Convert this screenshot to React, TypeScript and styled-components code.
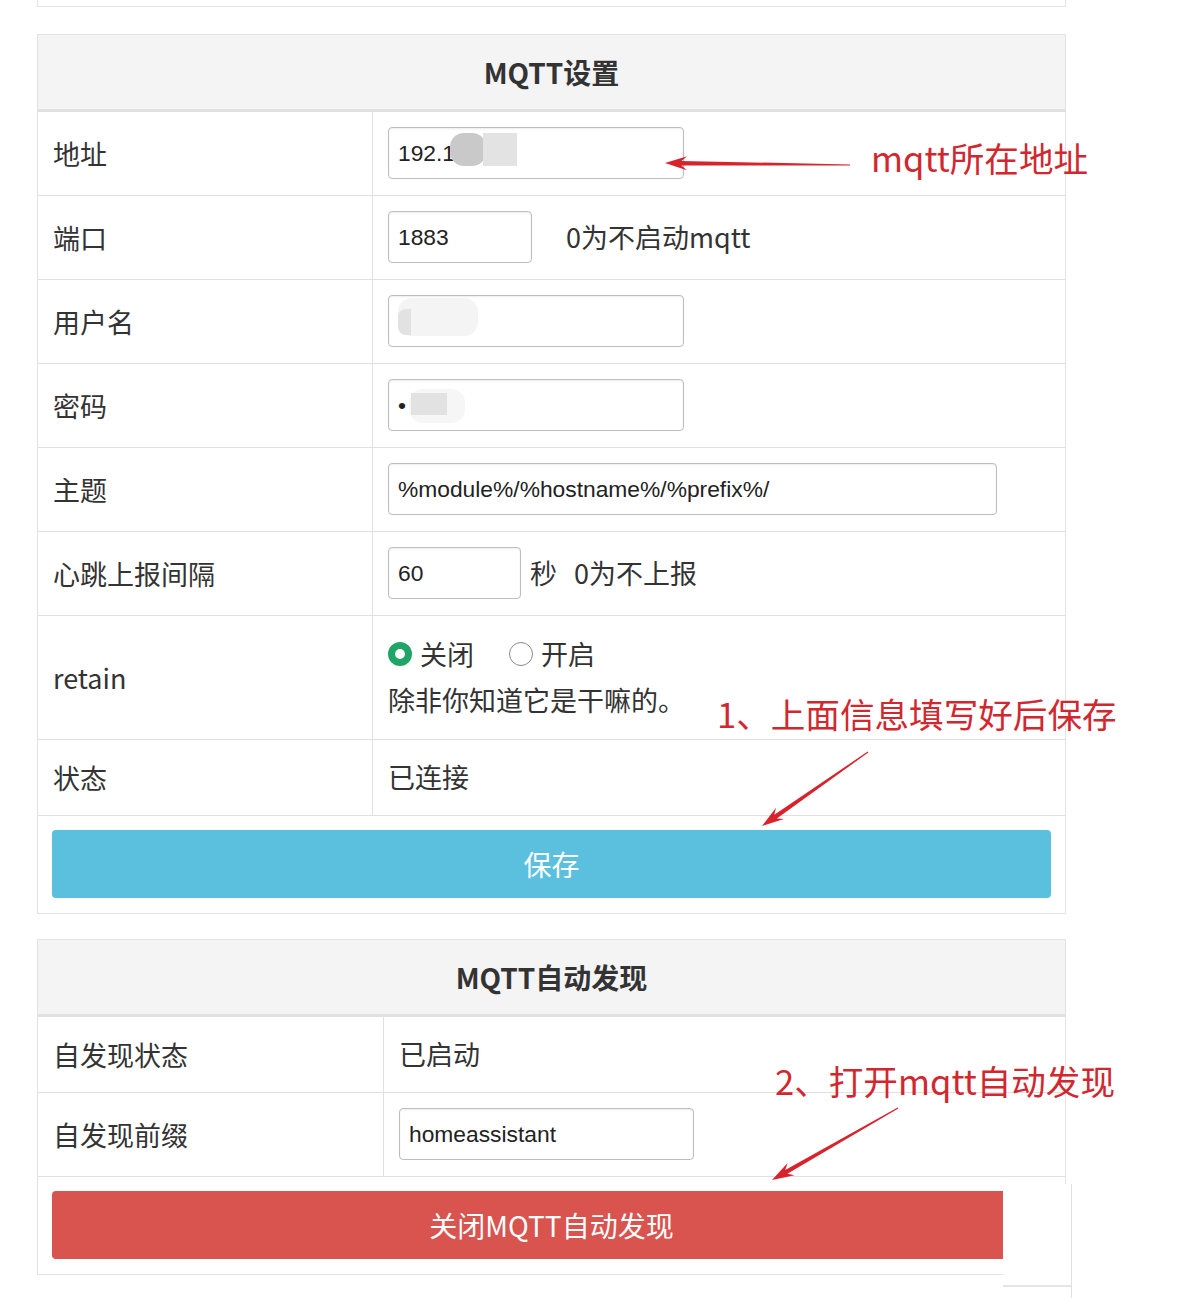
import React from "react";
import styled, { createGlobalStyle, css } from "styled-components";

const GlobalStyle = createGlobalStyle`
	html, body {
		margin: 0;
		padding: 0;
		background: #fff;
	}
	body {
		font-family: "Noto Sans CJK SC", "Noto Sans", sans-serif;
		color: #333;
	}
`;

const Page = styled.div`
	position: relative;
	width: 1200px;
	height: 1298px;
	overflow: hidden;
`;

const Column = styled.div`
	display: flex;
	flex-direction: column;
	width: 1029px;
	margin-left: 37px;
`;

const PrevPanelTail = styled.div`
	height: 6px;
	border: 1px solid #e3e3e3;
	border-top: none;
`;

const Panel = styled.section<{ $gap: number }>`
	margin-top: ${(p) => p.$gap}px;
	border: 1px solid #e3e3e3;
	background: #fff;
`;

const PanelHeader = styled.h2`
	margin: 0;
	height: 74px;
	display: flex;
	align-items: center;
	justify-content: center;
	background: #f4f4f4;
	border-bottom: 2px solid #e2e2e2;
	font-size: 28px;
	font-weight: 700;
	color: #333;
`;

const Grid = styled.div<{ $label: number }>`
	display: grid;
	grid-template-columns: ${(p) => p.$label}px 1fr;
`;

const LabelCell = styled.div`
	display: flex;
	align-items: center;
	padding: 0 15px;
	border-top: 1px solid #e0e0e0;
	border-right: 1px solid #e0e0e0;
	font-size: 27px;
	color: #333;
`;

const ValueCell = styled.div<{ $stack?: boolean }>`
	display: flex;
	flex-direction: ${(p) => (p.$stack ? "column" : "row")};
	align-items: ${(p) => (p.$stack ? "flex-start" : "center")};
	padding: 15px 15px 16px;
	min-height: 44px;
	border-top: 1px solid #e0e0e0;
	font-size: 27px;
	line-height: 44px;
	color: #333;
`;

const Line = styled.div`
	display: flex;
	align-items: center;
	height: 46px;
`;

const InputBox = styled.div<{ $w: number }>`
	position: relative;
	box-sizing: border-box;
	width: ${(p) => p.$w}px;
	height: 52px;
	display: flex;
	align-items: center;
	padding: 0 9px;
	border: 1px solid #bdbdbd;
	border-radius: 4px;
	box-shadow: inset 0 1px 2px rgba(0, 0, 0, 0.08);
	background: #fff;
	font-family: "Liberation Sans", Arial, sans-serif;
	font-size: 22.8px;
	color: #222;
`;

const Hint = styled.span<{ $gap: number }>`
	margin-left: ${(p) => p.$gap}px;
	white-space: nowrap;
`;

const Blur = styled.span<{ $x: number; $y: number; $w: number; $h: number; $bg: string; $r?: string }>`
	position: absolute;
	left: ${(p) => p.$x}px;
	top: ${(p) => p.$y}px;
	width: ${(p) => p.$w}px;
	height: ${(p) => p.$h}px;
	background: ${(p) => p.$bg};
	border-radius: ${(p) => p.$r || "14px"};
`;

const Radio = styled.span<{ $on?: boolean }>`
	box-sizing: border-box;
	width: 24px;
	height: 24px;
	border-radius: 50%;
	margin-right: 8px;
	background: #fff;
	${(p) =>
		p.$on
			? css`
					border: 7px solid #1fa667;
			  `
			: css`
					border: 1.5px solid #8a8a8a;
			  `}
`;

const RadioText = styled.span<{ $gap?: number }>`
	margin-right: ${(p) => p.$gap || 0}px;
`;

const ButtonRow = styled.div`
	padding: 14px 14px 15px;
	border-top: 1px solid #e0e0e0;
`;

const ActionButton = styled.button<{ $tone: "info" | "danger" }>`
	display: block;
	width: 100%;
	height: 68px;
	border: none;
	border-radius: 4px;
	background: ${(p) => (p.$tone === "info" ? "#5bc0de" : "#d9534f")};
	color: #fff;
	font-family: "Noto Sans CJK SC", sans-serif;
	font-size: 28px;
	cursor: pointer;
`;

const Note = styled.div<{ $x: number; $y: number }>`
	position: absolute;
	left: ${(p) => p.$x}px;
	top: ${(p) => p.$y}px;
	font-size: 34.6px;
	line-height: 40px;
	color: #d1282f;
	white-space: nowrap;
`;

const ArrowLayer = styled.svg`
	position: absolute;
	left: 0;
	top: 0;
	pointer-events: none;
`;

const Patch = styled.div`
	position: absolute;
	left: 1003px;
	top: 1184px;
	width: 68px;
	height: 114px;
	background: #fff;
	border-right: 1px solid #e0e0e0;
	&::after {
		content: "";
		position: absolute;
		left: 0;
		right: 0;
		top: 101px;
		border-top: 2px solid #e4e4e4;
	}
`;

function arrowPoints(x1: number, y1: number, x2: number, y2: number) {
	const len = Math.hypot(x2 - x1, y2 - y1);
	const ux = (x2 - x1) / len;
	const uy = (y2 - y1) / len;
	const nx = -uy;
	const ny = ux;
	const head = 22;
	const neck = [x2 - ux * head * 0.75, y2 - uy * head * 0.75];
	const back = [x2 - ux * head, y2 - uy * head];
	const pts = [
		[x1 + nx * 0.6, y1 + ny * 0.6],
		[neck[0] + nx * 2.2, neck[1] + ny * 2.2],
		[back[0] + nx * 7, back[1] + ny * 7],
		[x2, y2],
		[back[0] - nx * 7, back[1] - ny * 7],
		[neck[0] - nx * 2.2, neck[1] - ny * 2.2],
		[x1 - nx * 0.6, y1 - ny * 0.6],
	];
	return pts.map((p) => p.map((v) => v.toFixed(1)).join(",")).join(" ");
}

const arrows = [
	[850, 165, 665, 163],
	[868, 752, 762, 826],
	[898, 1108, 772, 1180],
];

export default function App() {
	return (
		<Page>
			<GlobalStyle />
			<Column>
				<PrevPanelTail />

				<Panel $gap={27}>
					<PanelHeader>MQTT设置</PanelHeader>
					<Grid $label={335}>
						<LabelCell>地址</LabelCell>
						<ValueCell>
							<InputBox $w={296}>
								192.1
								<Blur $x={61} $y={5} $w={36} $h={33} $bg="#c9c9c9" />
								<Blur $x={94} $y={5} $w={34} $h={33} $bg="#e3e3e3" $r="0" />
							</InputBox>
						</ValueCell>

						<LabelCell>端口</LabelCell>
						<ValueCell>
							<InputBox $w={144}>1883</InputBox>
							<Hint $gap={34}>0为不启动mqtt</Hint>
						</ValueCell>

						<LabelCell>用户名</LabelCell>
						<ValueCell>
							<InputBox $w={296}>
								<Blur $x={9} $y={2} $w={80} $h={38} $bg="#f4f4f4" />
								<Blur $x={9} $y={13} $w={13} $h={26} $bg="#e2e2e2" $r="8px 0 0 8px" />
							</InputBox>
						</ValueCell>

						<LabelCell>密码</LabelCell>
						<ValueCell>
							<InputBox $w={296}>
								•
								<Blur $x={20} $y={9} $w={56} $h={34} $bg="#f6f6f6" />
								<Blur $x={22} $y={13} $w={36} $h={22} $bg="#e2e2e2" $r="0" />
							</InputBox>
						</ValueCell>

						<LabelCell>主题</LabelCell>
						<ValueCell>
							<InputBox $w={609}>%module%/%hostname%/%prefix%/</InputBox>
						</ValueCell>

						<LabelCell>心跳上报间隔</LabelCell>
						<ValueCell>
							<InputBox $w={133}>60</InputBox>
							<Hint $gap={9}>秒</Hint>
							<Hint $gap={17}>0为不上报</Hint>
						</ValueCell>

						<LabelCell>retain</LabelCell>
						<ValueCell $stack>
							<Line>
								<Radio $on />
								<RadioText $gap={35}>关闭</RadioText>
								<Radio />
								<RadioText>开启</RadioText>
							</Line>
							<Line>除非你知道它是干嘛的。</Line>
						</ValueCell>

						<LabelCell>状态</LabelCell>
						<ValueCell>已连接</ValueCell>
					</Grid>
					<ButtonRow>
						<ActionButton $tone="info">保存</ActionButton>
					</ButtonRow>
				</Panel>

				<Panel $gap={25}>
					<PanelHeader>MQTT自动发现</PanelHeader>
					<Grid $label={346}>
						<LabelCell>自发现状态</LabelCell>
						<ValueCell>已启动</ValueCell>

						<LabelCell>自发现前缀</LabelCell>
						<ValueCell>
							<InputBox $w={295}>homeassistant</InputBox>
						</ValueCell>
					</Grid>
					<ButtonRow>
						<ActionButton $tone="danger">关闭MQTT自动发现</ActionButton>
					</ButtonRow>
				</Panel>
			</Column>

			<Patch />

			<Note $x={871} $y={137}>mqtt所在地址</Note>
			<Note $x={717} $y={693}>1、上面信息填写好后保存</Note>
			<Note $x={775} $y={1060}>2、打开mqtt自动发现</Note>

			<ArrowLayer width="1200" height="1298" viewBox="0 0 1200 1298">
				{arrows.map(([x1, y1, x2, y2], i) => (
					<polygon key={i} points={arrowPoints(x1, y1, x2, y2)} fill="#d8232c" />
				))}
			</ArrowLayer>
		</Page>
	);
}
